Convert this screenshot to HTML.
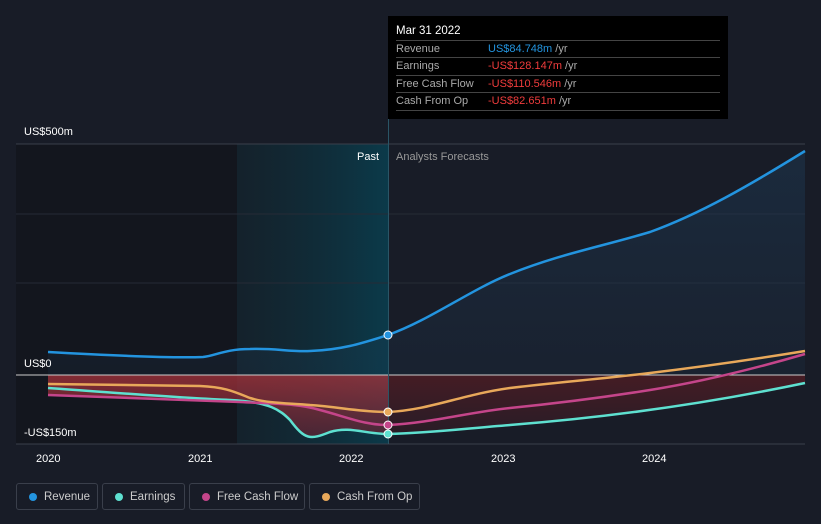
<!DOCTYPE html>
<html><head><meta charset="utf-8"><style>
body{margin:0;background:#181c27;font-family:"Liberation Sans",sans-serif;}
.wrap{position:relative;width:821px;height:524px;overflow:hidden;background:#181c27}
.tip{position:absolute;left:388px;top:16px;width:340px;height:103px;background:#000;color:#fff;font-size:11px}
.tip .h{position:absolute;left:8px;top:9px;font-size:11.5px}
.row{position:absolute;left:8px;width:324px;border-top:1px solid #444;height:17px;line-height:17px;color:#aaa}
.row span{position:absolute;left:92px}
.leg{position:absolute;top:483px;height:27px;border:1px solid #3a3f4b;border-radius:3px;color:#ccc;font-size:11.5px;line-height:27px;box-sizing:border-box}
.leg i{position:absolute;left:12px;top:9px;width:8px;height:8px;border-radius:50%}
.leg b{font-weight:normal;position:absolute;left:27px}
</style></head><body><div class="wrap">
<svg width="821" height="524" style="position:absolute;left:0;top:0">
<defs>
<linearGradient id="hl" x1="0" x2="1"><stop offset="0" stop-color="#0f2a33" stop-opacity=".4"/><stop offset="1" stop-color="#0b3a4a"/></linearGradient>
<linearGradient id="rv" x1="0" y1="0" x2="0" y2="1"><stop offset="0" stop-color="#1e3a55" stop-opacity=".8"/><stop offset="1" stop-color="#1e3a55" stop-opacity=".3"/></linearGradient>
<linearGradient id="neg" x1="0" y1="0" x2="0" y2="1"><stop offset="0" stop-color="#a8323a"/><stop offset="1" stop-color="#5a2434"/></linearGradient>
<linearGradient id="neg2" x1="0" y1="0" x2="0" y2="1"><stop offset="0" stop-color="#4a1c24"/><stop offset="1" stop-color="#2a1c26"/></linearGradient>
</defs>
<rect x="16" y="144" width="221" height="300" fill="#13161e"/>
<rect x="237" y="144" width="152" height="300" fill="url(#hl)"/>
<line x1="16" y1="144" x2="805" y2="144" stroke="#3a3f4b"/>
<line x1="16" y1="214" x2="805" y2="214" stroke="#262b36"/>
<line x1="16" y1="283" x2="805" y2="283" stroke="#262b36"/>
<line x1="16" y1="444" x2="805" y2="444" stroke="#3a3f4b"/>
<path d="M48 352 C120 356 180 358 203 357 C215 356 225 349 250 349 C275 348 290 352 310 351 C340 350 360 344 388 335 C430 320 470 290 510 274 C560 254 600 247 650 232 C700 214 750 185 805 151 L805 375 L48 375Z" fill="url(#rv)" opacity=".6"/>
<path d="M48 375 L388 375 L388 434 C365 434 350 426 330 432 C310 440 305 440 290 420 C280 410 270 402 230 400 C180 398 120 397 48 395Z" fill="url(#neg)" opacity=".75"/>
<path d="M388 375 L805 375 L805 383 C700 405 600 420 510 425 C450 430 420 434 388 434Z" fill="url(#neg2)" opacity=".9"/>
<line x1="16" y1="375" x2="805" y2="375" stroke="#ccc" stroke-width="1"/>
<line x1="388.5" y1="16" x2="388.5" y2="444" stroke="#2a5566"/>
<path d="M48 352 C120 356 180 358 203 357 C215 356 225 349 250 349 C275 348 290 352 310 351 C340 350 360 344 388 335 C430 320 470 290 510 274 C560 254 600 247 650 232 C700 214 750 185 805 151" fill="none" stroke="#2394df" stroke-width="2.5"/>
<path d="M48 388 C120 393 180 398 230 400 C270 402 280 410 290 420 C305 440 310 440 330 432 C350 426 365 434 388 434 C430 433 470 428 510 425 C600 418 700 405 805 383" fill="none" stroke="#5ee0d0" stroke-width="2.5"/>
<path d="M48 395 C120 398 180 400 240 402 C280 404 300 404 320 410 C350 418 365 425 388 425 C430 423 470 412 510 408 C560 403 600 398 650 390 C700 382 750 370 805 354" fill="none" stroke="#c4458a" stroke-width="2.5"/>
<path d="M48 384 L200 386 C225 387 235 392 250 398 C270 404 290 403 310 405 C340 407 360 412 388 412 C430 410 460 395 510 388 C560 382 600 379 650 373 C700 367 750 360 805 351" fill="none" stroke="#e8a85a" stroke-width="2.5"/>
<circle cx="388" cy="335" r="4" fill="#2394df" stroke="#fff"/>
<circle cx="388" cy="412" r="4" fill="#e8a85a" stroke="#fff"/>
<circle cx="388" cy="425" r="4" fill="#c4458a" stroke="#fff"/>
<circle cx="388" cy="434" r="4" fill="#5ee0d0" stroke="#fff"/>
<g font-size="11" fill="#fff">
<text x="24" y="135">US$500m</text><text x="24" y="367">US$0</text><text x="24" y="436">-US$150m</text>
<text x="36" y="462">2020</text><text x="188" y="462">2021</text><text x="339" y="462">2022</text><text x="491" y="462">2023</text><text x="642" y="462">2024</text>
<text x="357" y="160">Past</text><text x="396" y="160" fill="#999">Analysts Forecasts</text>
</g>
</svg>
<div class="tip"><div class="h">Mar 31 2022</div>
<div class="row" style="top:24px">Revenue<span style="color:#2394df">US$84.748m <b style="font-weight:normal;color:#aaa">/yr</b></span></div>
<div class="row" style="top:41px">Earnings<span style="color:#f03c3c">-US$128.147m <b style="font-weight:normal;color:#aaa">/yr</b></span></div>
<div class="row" style="top:59px">Free Cash Flow<span style="color:#f03c3c">-US$110.546m <b style="font-weight:normal;color:#aaa">/yr</b></span></div>
<div class="row" style="top:76px;border-bottom:1px solid #444">Cash From Op<span style="color:#f03c3c">-US$82.651m <b style="font-weight:normal;color:#aaa">/yr</b></span></div>
</div>
<div class="leg" style="left:16px;width:82px"><i style="background:#2394df"></i><b>Revenue</b></div>
<div class="leg" style="left:102px;width:83px"><i style="background:#5ee0d0"></i><b>Earnings</b></div>
<div class="leg" style="left:189px;width:116px"><i style="background:#c4458a"></i><b>Free Cash Flow</b></div>
<div class="leg" style="left:309px;width:111px"><i style="background:#e8a85a"></i><b>Cash From Op</b></div>
</div></body></html>
